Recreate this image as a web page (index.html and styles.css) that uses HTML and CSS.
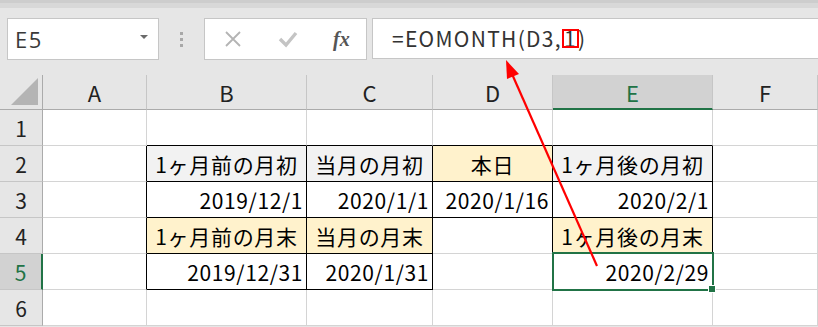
FILE: index.html
```html
<!DOCTYPE html>
<html lang="ja">
<head>
  <meta charset="UTF-8">
  <title>EOMONTH</title>
  <link rel="stylesheet" href="styles.css">
</head>
<body>

  <div class="toolbar">
    <div class="name-box">
      <span class="name-text">E5</span>
      <span class="drop"></span>
    </div>
    <div class="grip"><i></i><i></i><i></i></div>
    <div class="btn-box">
      <svg class="ic" width="20" height="20" viewBox="0 0 20 20">
        <path d="M3 3 L17 17 M17 3 L3 17" stroke="#b4b4b4" stroke-width="1.8" fill="none"/>
      </svg>
      <svg class="ic" width="20" height="20" viewBox="0 0 20 20">
        <path d="M2 10 L8 16 L18 4" stroke="#c4c4c4" stroke-width="3.4" fill="none"/>
      </svg>
      <span class="fx">fx</span>
    </div>
    <div class="formula">=EOMONTH(D3,<span class="hl">1</span>)</div>
  </div>

  <div class="sheet">
    <!-- header row -->
    <div class="corner"><span class="tri"></span></div>
    <div class="col-h">A</div>
    <div class="col-h">B</div>
    <div class="col-h">C</div>
    <div class="col-h">D</div>
    <div class="col-h sel">E</div>
    <div class="col-h">F</div>

    <!-- row 1 -->
    <div class="row-h">1</div>
    <div class="cell"></div>
    <div class="cell bb"></div>
    <div class="cell bb"></div>
    <div class="cell bb"></div>
    <div class="cell bb"></div>
    <div class="cell"></div>

    <!-- row 2 -->
    <div class="row-h">2</div>
    <div class="cell br"></div>
    <div class="cell br bb gray lbl">1ヶ月前の月初</div>
    <div class="cell br bb gray lbl">当月の月初</div>
    <div class="cell br bb yellow lbl">本日</div>
    <div class="cell br bb gray lbl">1ヶ月後の月初</div>
    <div class="cell"></div>

    <!-- row 3 -->
    <div class="row-h">3</div>
    <div class="cell br"></div>
    <div class="cell br bb num">2019/12/1</div>
    <div class="cell br bb num">2020/1/1</div>
    <div class="cell br bb num">2020/1/16</div>
    <div class="cell br bb num">2020/2/1</div>
    <div class="cell"></div>

    <!-- row 4 -->
    <div class="row-h">4</div>
    <div class="cell br"></div>
    <div class="cell br bb yellow lbl">1ヶ月前の月末</div>
    <div class="cell br bb yellow lbl">当月の月末</div>
    <div class="cell br"></div>
    <div class="cell br bb yellow lbl">1ヶ月後の月末</div>
    <div class="cell"></div>

    <!-- row 5 -->
    <div class="row-h sel">5</div>
    <div class="cell br"></div>
    <div class="cell br bb num">2019/12/31</div>
    <div class="cell br bb num">2020/1/31</div>
    <div class="cell br"></div>
    <div class="cell br bb num active">2020/2/29</div>
    <div class="cell"></div>

    <!-- row 6 -->
    <div class="row-h">6</div>
    <div class="cell"></div>
    <div class="cell"></div>
    <div class="cell"></div>
    <div class="cell"></div>
    <div class="cell"></div>
    <div class="cell"></div>
  </div>

  <svg class="arrow" width="818" height="327" viewBox="0 0 818 327">
    <line x1="597" y1="266" x2="512" y2="74" stroke="#ff0000" stroke-width="2.2"/>
    <polygon points="506,60 519,74 507,79" fill="#ff0000"/>
  </svg>

</body>
</html>
```

FILE: styles.css
```css
body {
  margin: 0;
  width: 818px;
  height: 327px;
  overflow: hidden;
  position: relative;
  background: #e6e6e6;
  font-family: "Noto Sans CJK JP", "Noto Sans", sans-serif;
  color: #000;
}

/* formula bar */
.toolbar {
  height: 75px;
  display: flex;
  align-items: flex-start;
  padding: 18px 0 0 7px;
  box-sizing: border-box;
  background: linear-gradient(#cdcdcd 0 3px, #d8d8d8 3px 8px, #e6e6e6 8px);
}
.name-box {
  width: 152px;
  height: 42px;
  box-sizing: border-box;
  background: #fff;
  border: 1px solid #c6c6c6;
  display: flex;
  align-items: center;
  justify-content: space-between;
  padding: 0 10px 0 7px;
}
.name-text {
  font-family: "Open Sans", "Noto Sans", sans-serif;
  font-size: 22px;
  color: #3a3a3a;
  letter-spacing: 1.5px;
}
.drop {
  width: 0;
  height: 0;
  border-left: 4px solid transparent;
  border-right: 4px solid transparent;
  border-top: 4px solid #6a6a6a;
  margin-top: -4px;
}
.grip {
  width: 45px;
  height: 42px;
  display: flex;
  flex-direction: column;
  align-items: center;
  justify-content: center;
  gap: 3px;
}
.grip i {
  width: 3px;
  height: 3px;
  background: #a8a8a8;
}
.btn-box {
  width: 163px;
  height: 42px;
  box-sizing: border-box;
  background: #fff;
  border: 1px solid #c6c6c6;
  display: flex;
  align-items: center;
  padding: 0 0 0 18px;
  gap: 35px;
}
.fx {
  font-family: "Liberation Serif", serif;
  font-style: italic;
  font-weight: bold;
  font-size: 20px;
  color: #555;
}
.formula {
  margin-left: 5px;
  flex: 1;
  height: 41px;
  box-sizing: border-box;
  background: #fff;
  border: 1px solid #c6c6c6;
  border-right: none;
  padding-left: 19px;
  font-size: 21px;
  line-height: 38px;
  letter-spacing: 1.3px;
  color: #333;
}
.hl {
  position: relative;
  margin-left: 1px;
  padding: 0 1px;
}
.hl::after {
  content: "";
  position: absolute;
  left: -1px;
  right: -1px;
  top: 6px;
  bottom: 5px;
  border: 2px solid #ff0000;
}

/* sheet grid */
.sheet {
  display: grid;
  grid-template-columns: 43px 104px 160px 126px 120px 160px 1fr;
  grid-template-rows: 35px repeat(6, 36px);
  font-size: 21px;
}
.corner,
.col-h,
.row-h {
  background: #e6e6e6;
  box-sizing: border-box;
  display: flex;
  align-items: center;
  justify-content: center;
  color: #222;
}
.col-h {
  font-size: 22px;
}
.corner {
  border-right: 1px solid #ababab;
  border-bottom: 1px solid #ababab;
  position: relative;
}
.tri {
  position: absolute;
  right: 4px;
  bottom: 4px;
  width: 0;
  height: 0;
  border-left: 27px solid transparent;
  border-bottom: 27px solid #b4b4b4;
}
.col-h {
  border-right: 1px solid #c6c6c6;
  border-bottom: 1px solid #ababab;
}
.col-h.sel {
  background: #d2d2d2;
  color: #217346;
  border-bottom: 2px solid #217346;
}
.row-h {
  border-right: 1px solid #ababab;
  border-bottom: 1px solid #c6c6c6;
}
.row-h.sel {
  background: #d2d2d2;
  color: #217346;
  border-right: 2px solid #217346;
}
.cell {
  background: #fff;
  box-sizing: border-box;
  border-right: 1px solid #d4d4d4;
  border-bottom: 1px solid #d4d4d4;
  display: flex;
  align-items: center;
  white-space: nowrap;
}
.cell.br {
  border-right-color: #000;
}
.cell.bb {
  border-bottom-color: #000;
}
.gray {
  background: #f2f2f2;
}
.yellow {
  background: #fff2cc;
}
.lbl {
  justify-content: center;
  letter-spacing: 0.7px;
}
.num {
  justify-content: flex-end;
  padding-right: 3px;
  letter-spacing: 0.6px;
}
.active {
  position: relative;
}
.active::before {
  content: "";
  position: absolute;
  left: -1px;
  top: -2px;
  right: -2px;
  bottom: -2px;
  border: 2px solid #217346;
}
.active::after {
  content: "";
  position: absolute;
  right: -4px;
  bottom: -4px;
  width: 6px;
  height: 6px;
  background: #217346;
  border: 1px solid #fff;
}

.arrow {
  position: absolute;
  left: 0;
  top: 0;
  pointer-events: none;
}
```
